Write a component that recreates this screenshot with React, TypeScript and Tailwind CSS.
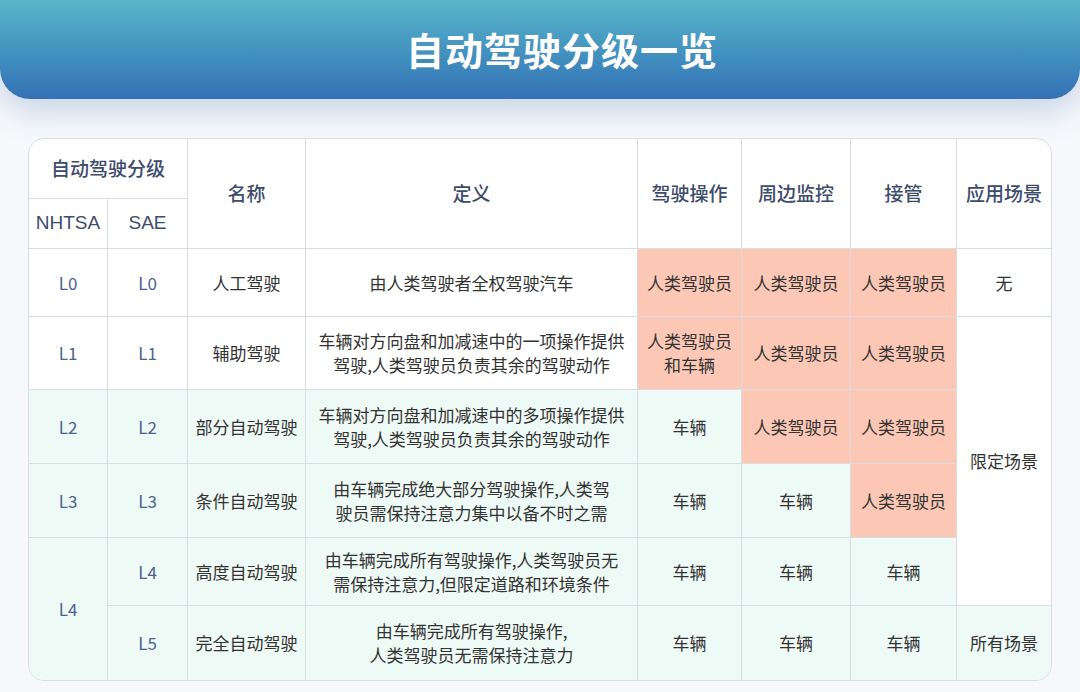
import React from "react";

const S = "bg-[#fcc8b5]";
const M = "bg-[#eefaf6]";
const W = "bg-white";
const td = "border-r border-b border-[#d9dde3] text-center align-middle text-[17px] text-[#333] leading-[24px]";
const lv = "border-r border-b border-[#d9dde3] text-center align-middle text-[17px] text-[#4a6290]";
const th = "border-r border-b border-[#d9dde3] text-center align-middle text-[19px] text-[#3d4c6b] font-medium";

export default function App() {
  return (
    <div className="w-[1080px] h-[692px] bg-[#f6f8fb] overflow-hidden" style={{ fontFamily: '"Noto Sans CJK SC", "Liberation Sans", sans-serif' }}>
      <div className="h-[99px] rounded-b-[30px] bg-gradient-to-b from-[#58b6c9] to-[#3471b5] flex items-center justify-center pl-[44px] shadow-[0_12px_30px_rgba(60,110,170,0.25)]">
        <h1 className="text-white text-[38px] font-bold tracking-[1px] -mt-[2px]">自动驾驶分级一览</h1>
      </div>
      <div className="mt-[39px] ml-[28px] w-[1024px] rounded-[16px] border border-[#d9dde3] overflow-hidden bg-white">
        <table className="w-full border-separate border-spacing-0 table-fixed">
          <colgroup>
            <col className="w-[79px]" />
            <col className="w-[80px]" />
            <col className="w-[118px]" />
            <col className="w-[332px]" />
            <col className="w-[104px]" />
            <col className="w-[109px]" />
            <col className="w-[106px]" />
            <col />
          </colgroup>
          <tbody>
            <tr className="h-[60px]">
              <td colSpan={2} className={th + " text-[18px]"}>自动驾驶分级</td>
              <td rowSpan={2} className={th}>名称</td>
              <td rowSpan={2} className={th}>定义</td>
              <td rowSpan={2} className={th}>驾驶操作</td>
              <td rowSpan={2} className={th}>周边监控</td>
              <td rowSpan={2} className={th}>接管</td>
              <td rowSpan={2} className={th + " border-r-0"}>应用场景</td>
            </tr>
            <tr className="h-[50px]">
              <td className={th + " text-[17px] font-normal"} style={{ fontFamily: '"Liberation Sans", sans-serif' }}>NHTSA</td>
              <td className={th + " text-[17px] font-normal"} style={{ fontFamily: '"Liberation Sans", sans-serif' }}>SAE</td>
            </tr>
            <tr className="h-[68px]">
              <td className={lv + " " + W}>L0</td>
              <td className={lv + " " + W}>L0</td>
              <td className={td + " " + W}>人工驾驶</td>
              <td className={td + " " + W}>由人类驾驶者全权驾驶汽车</td>
              <td className={td + " " + S}>人类驾驶员</td>
              <td className={td + " " + S}>人类驾驶员</td>
              <td className={td + " " + S}>人类驾驶员</td>
              <td className={td + " " + W + " border-r-0"}>无</td>
            </tr>
            <tr className="h-[73px]">
              <td className={lv + " " + W}>L1</td>
              <td className={lv + " " + W}>L1</td>
              <td className={td + " " + W}>辅助驾驶</td>
              <td className={td + " " + W}>车辆对方向盘和加减速中的一项操作提供<br />驾驶,人类驾驶员负责其余的驾驶动作</td>
              <td className={td + " " + S}>人类驾驶员<br />和车辆</td>
              <td className={td + " " + S}>人类驾驶员</td>
              <td className={td + " " + S}>人类驾驶员</td>
              <td rowSpan={4} className={td + " " + W + " border-r-0"}>限定场景</td>
            </tr>
            <tr className="h-[74px]">
              <td className={lv + " " + M}>L2</td>
              <td className={lv + " " + M}>L2</td>
              <td className={td + " " + M}>部分自动驾驶</td>
              <td className={td + " " + M}>车辆对方向盘和加减速中的多项操作提供<br />驾驶,人类驾驶员负责其余的驾驶动作</td>
              <td className={td + " " + M}>车辆</td>
              <td className={td + " " + S}>人类驾驶员</td>
              <td className={td + " " + S}>人类驾驶员</td>
            </tr>
            <tr className="h-[74px]">
              <td className={lv + " " + M}>L3</td>
              <td className={lv + " " + M}>L3</td>
              <td className={td + " " + M}>条件自动驾驶</td>
              <td className={td + " " + M}>由车辆完成绝大部分驾驶操作,人类驾<br />驶员需保持注意力集中以备不时之需</td>
              <td className={td + " " + M}>车辆</td>
              <td className={td + " " + M}>车辆</td>
              <td className={td + " " + S}>人类驾驶员</td>
            </tr>
            <tr className="h-[68px]">
              <td rowSpan={2} className={lv + " " + M + " border-b-0"}>L4</td>
              <td className={lv + " " + M}>L4</td>
              <td className={td + " " + M}>高度自动驾驶</td>
              <td className={td + " " + M}>由车辆完成所有驾驶操作,人类驾驶员无<br />需保持注意力,但限定道路和环境条件</td>
              <td className={td + " " + M}>车辆</td>
              <td className={td + " " + M}>车辆</td>
              <td className={td + " " + M}>车辆</td>
            </tr>
            <tr className="h-[74px]">
              <td className={lv + " " + M + " border-b-0"}>L5</td>
              <td className={td + " " + M + " border-b-0"}>完全自动驾驶</td>
              <td className={td + " " + M + " border-b-0"}>由车辆完成所有驾驶操作,<br />人类驾驶员无需保持注意力</td>
              <td className={td + " " + M + " border-b-0"}>车辆</td>
              <td className={td + " " + M + " border-b-0"}>车辆</td>
              <td className={td + " " + M + " border-b-0"}>车辆</td>
              <td className={td + " " + M + " border-b-0 border-r-0"}>所有场景</td>
            </tr>
          </tbody>
        </table>
      </div>
    </div>
  );
}
